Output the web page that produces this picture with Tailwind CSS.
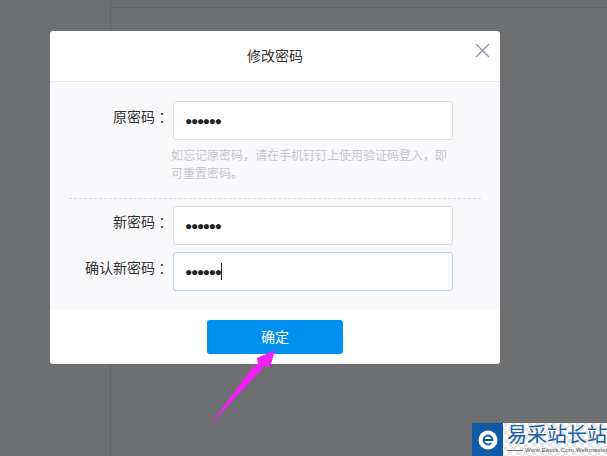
<!DOCTYPE html>
<html lang="zh">
<head>
<meta charset="utf-8">
<script src="https://cdn.jsdelivr.net/npm/@tailwindcss/browser@4"></script>
</head>
<body class="m-0">
<div class="relative w-[607px] h-[456px] overflow-hidden bg-[#6e6f71] font-['Liberation_Sans','Noto_Sans_CJK_SC',sans-serif]">
  <div class="flex h-full">
    <div class="w-[111px] h-full border-r border-[#636466]"></div>
    <div class="flex-1 h-[8px] border-b border-[#636466]"></div>
  </div>

  <div class="absolute left-[50px] top-[31px] w-[450px] h-[333px] bg-white rounded-[3px] overflow-hidden flex flex-col">
    <div class="h-[51px] shrink-0 border-b border-[#e8e9ec] flex items-center justify-center relative">
      <span class="text-[14px] text-[#333] pt-[1px]">修改密码</span>
      <svg class="absolute right-[10px] top-[12px]" width="15" height="15" viewBox="0 0 15 15" fill="none" stroke="#8a93a6" stroke-width="1.2"><path d="M1 1 L14 14 M14 1 L1 14"/></svg>
    </div>
    <div class="h-[228px] shrink-0 bg-[#f9f9fc] pt-[19px] flex flex-col">
      <div class="flex items-start gap-[4px]">
        <label class="w-[119px] h-[39px] flex items-center justify-end text-[14px] text-[#333] pb-[7px]">原密码<span class="font-['Noto_Sans_CJK_TC']">：</span></label>
        <div class="w-[280px] h-[39px] bg-white border border-[#e0e0e0] rounded-[3px] flex items-center pl-[11px] text-[#222] text-[12px] tracking-[-1.3px] leading-none">●●●●●●</div>
      </div>
      <div class="ml-[121px] mt-[6px] w-[290px] text-[12px] leading-[18px] text-[#c6c6c9]">
        <p class="whitespace-nowrap">如忘记原密码<span class="font-['Noto_Sans_CJK_TC']">，</span>请在手机钉钉上使用验证码登入<span class="font-['Noto_Sans_CJK_TC']">，</span>即</p>
        <p>可重置密码。</p>
      </div>
      <div class="mx-[19px] mt-[15px] border-t border-dashed border-[#dcdcdf]"></div>
      <div class="flex items-start gap-[4px] mt-[7px]">
        <label class="w-[119px] h-[39px] flex items-center justify-end text-[14px] text-[#333] pb-[7px]">新密码<span class="font-['Noto_Sans_CJK_TC']">：</span></label>
        <div class="w-[280px] h-[39px] bg-white border border-[#e0e0e0] rounded-[3px] flex items-center pl-[11px] text-[#222] text-[12px] tracking-[-1.3px] leading-none">●●●●●●</div>
      </div>
      <div class="flex items-start gap-[4px] mt-[7px]">
        <label class="w-[119px] h-[39px] flex items-center justify-end text-[14px] text-[#333] pb-[7px]">确认新密码<span class="font-['Noto_Sans_CJK_TC']">：</span></label>
        <div class="w-[280px] h-[39px] bg-white border border-[#a6d8fb] rounded-[3px] flex items-center pl-[11px] text-[#222] text-[12px] tracking-[-1.3px] leading-none">●●●●●●<span class="w-[1px] h-[17px] bg-[#222]"></span></div>
      </div>
    </div>
    <div class="flex-1 flex justify-center pt-[10px]">
      <button class="w-[136px] h-[34px] bg-[#0090f0] rounded-[3px] text-white text-[14px]">确定</button>
    </div>
  </div>

  <svg class="absolute left-[205px] top-[345px]" width="75" height="85" viewBox="205 345 75 85"><path d="M209 426 L252 368 L258 364 L257 358 L275 350 L270 368 L266 365 Z" fill="#f01ff5" /></svg>

  <div class="absolute left-[472px] top-[423px] w-[135px] h-[33px] bg-[repeating-conic-gradient(#ffffff_0_25%,#e6e6e6_0_50%)] bg-[length:8px_8px] flex">
    <div class="w-[31px] h-full bg-[#0d5aa6] flex items-center justify-center">
      <svg width="22" height="22" viewBox="0 0 22 22"><circle cx="11" cy="11" r="9.5" fill="#fff"/><path d="M6.5 11 H15.5 A4.5 4.5 0 1 0 14.2 14.2" fill="none" stroke="#0d5aa6" stroke-width="1.8"/></svg>
    </div>
    <div class="flex-1 pl-[4px] flex flex-col overflow-hidden">
      <div class="text-[20px] leading-[24px] text-[#1a5fa8] whitespace-nowrap">易采站长站</div>
      <div class="flex items-center gap-[2px] text-[6px] tracking-[0.2px] leading-[7px] text-[#555] whitespace-nowrap">
        <span class="w-[16px] h-[1px] bg-[#777] shrink-0"></span><span>Www.Easck.Com Webmaster</span>
      </div>
    </div>
  </div>
</div>
</body>
</html>
